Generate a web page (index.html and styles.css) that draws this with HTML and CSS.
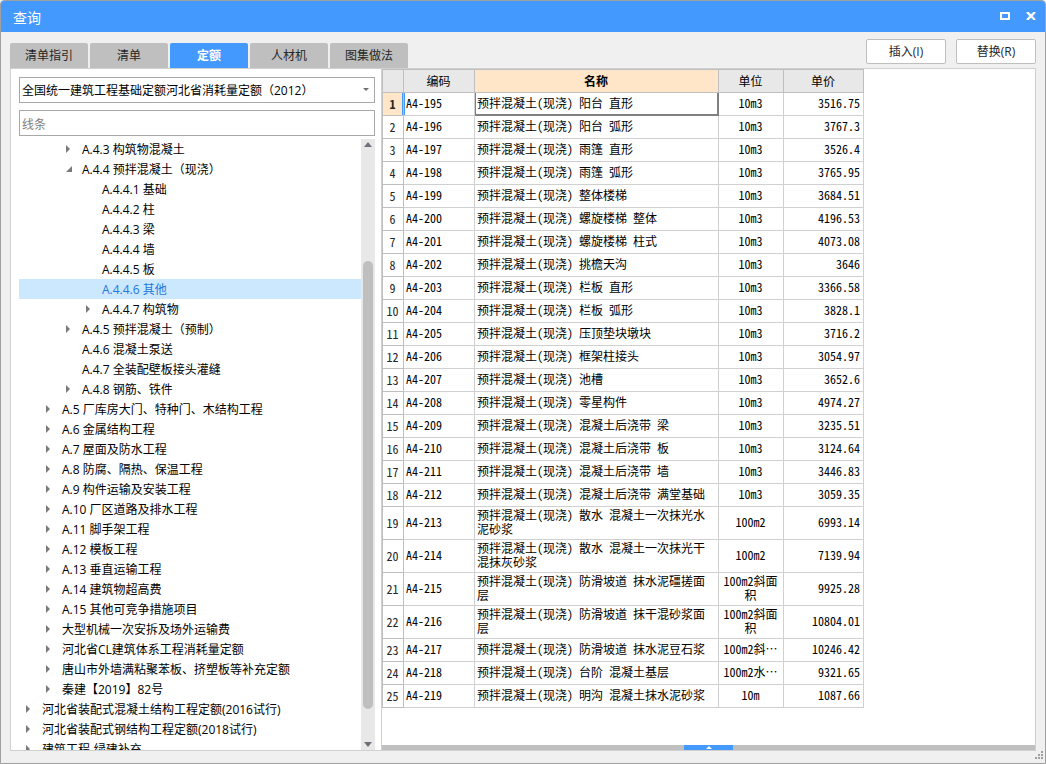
FILE: index.html
```html
<!DOCTYPE html>
<html lang="zh-CN">
<head>
<meta charset="utf-8">
<title>查询</title>
<link rel="stylesheet" href="styles.css">
</head>
<body>
<div class="window">
  <header class="titlebar">
    <h1 class="title">查询</h1>
    <button class="win-btn" aria-label="最大化"><svg width="10" height="8" viewBox="0 0 10 8"><path d="M1 1H9V7H1Z" fill="none" stroke="#fff" stroke-width="2"/></svg></button>
    <button class="win-btn" aria-label="关闭"><svg width="10" height="8" viewBox="0 0 10 8"><path d="M1 0L9 8M9 0L1 8" fill="none" stroke="#fff" stroke-width="2.4"/></svg></button>
  </header>

  <div class="toolbar">
    <nav class="tabs">
      <button class="tab">清单指引</button>
      <button class="tab">清单</button>
      <button class="tab active">定额</button>
      <button class="tab">人材机</button>
      <button class="tab">图集做法</button>
    </nav>
    <div class="actions">
      <button class="action">插入(I)</button>
      <button class="action">替换(R)</button>
    </div>
  </div>

  <main class="panel">
    <aside class="side">
      <div class="combo">
        <select class="field" aria-label="定额库"><option>全国统一建筑工程基础定额河北省消耗量定额（2012）</option></select>
      </div>
      <input class="field search" type="text" placeholder="线条" aria-label="搜索">
      <div class="tree-area">
        <ul class="tree">
          <li class="node l3"><button class="toggle" aria-label="展开"></button>A.4.3 构筑物混凝土</li>
          <li class="node l3"><button class="toggle open" aria-label="收起"></button>A.4.4 预拌混凝土（现浇）</li>
          <li class="node l4 leaf">A.4.4.1 基础</li>
          <li class="node l4 leaf">A.4.4.2 柱</li>
          <li class="node l4 leaf">A.4.4.3 梁</li>
          <li class="node l4 leaf">A.4.4.4 墙</li>
          <li class="node l4 leaf">A.4.4.5 板</li>
          <li class="node l4 leaf selected">A.4.4.6 其他</li>
          <li class="node l4"><button class="toggle" aria-label="展开"></button>A.4.4.7 构筑物</li>
          <li class="node l3"><button class="toggle" aria-label="展开"></button>A.4.5 预拌混凝土（预制）</li>
          <li class="node l3 leaf">A.4.6 混凝土泵送</li>
          <li class="node l3 leaf">A.4.7 全装配壁板接头灌缝</li>
          <li class="node l3"><button class="toggle" aria-label="展开"></button>A.4.8 钢筋、铁件</li>
          <li class="node l2"><button class="toggle" aria-label="展开"></button>A.5 厂库房大门、特种门、木结构工程</li>
          <li class="node l2"><button class="toggle" aria-label="展开"></button>A.6 金属结构工程</li>
          <li class="node l2"><button class="toggle" aria-label="展开"></button>A.7 屋面及防水工程</li>
          <li class="node l2"><button class="toggle" aria-label="展开"></button>A.8 防腐、隔热、保温工程</li>
          <li class="node l2"><button class="toggle" aria-label="展开"></button>A.9 构件运输及安装工程</li>
          <li class="node l2"><button class="toggle" aria-label="展开"></button>A.10 厂区道路及排水工程</li>
          <li class="node l2"><button class="toggle" aria-label="展开"></button>A.11 脚手架工程</li>
          <li class="node l2"><button class="toggle" aria-label="展开"></button>A.12 模板工程</li>
          <li class="node l2"><button class="toggle" aria-label="展开"></button>A.13 垂直运输工程</li>
          <li class="node l2"><button class="toggle" aria-label="展开"></button>A.14 建筑物超高费</li>
          <li class="node l2"><button class="toggle" aria-label="展开"></button>A.15 其他可竞争措施项目</li>
          <li class="node l2"><button class="toggle" aria-label="展开"></button>大型机械一次安拆及场外运输费</li>
          <li class="node l2"><button class="toggle" aria-label="展开"></button>河北省CL建筑体系工程消耗量定额</li>
          <li class="node l2"><button class="toggle" aria-label="展开"></button>唐山市外墙满粘聚苯板、挤塑板等补充定额</li>
          <li class="node l2"><button class="toggle" aria-label="展开"></button>秦建【2019】82号</li>
          <li class="node l1"><button class="toggle" aria-label="展开"></button>河北省装配式混凝土结构工程定额(2016试行)</li>
          <li class="node l1"><button class="toggle" aria-label="展开"></button>河北省装配式钢结构工程定额(2018试行)</li>
          <li class="node l1"><button class="toggle" aria-label="展开"></button>建筑工程-绿建补充</li>
        </ul>
        <div class="scrollbar">
          <button class="scroll-btn" aria-label="向上滚动"><svg width="8" height="5" viewBox="0 0 8 5"><path d="M0 5L4 0L8 5Z" fill="#70707c"/></svg></button>
          <div class="track"><div class="thumb"></div></div>
          <button class="scroll-btn" aria-label="向下滚动"><svg width="8" height="5" viewBox="0 0 8 5"><path d="M0 0L4 5L8 0Z" fill="#70707c"/></svg></button>
        </div>
      </div>
    </aside>

    <section class="content">
      <div class="grid-area">
        <table class="grid">
          <colgroup><col class="c-num"><col class="c-code"><col class="c-name"><col class="c-unit"><col class="c-price"></colgroup>
          <thead>
            <tr><th></th><th>编码</th><th class="current">名称</th><th>单位</th><th>单价</th></tr>
          </thead>
          <tbody>
            <tr class="current-row"><th>1</th><td>A4-195</td><td>预拌混凝土(现浇) 阳台 直形</td><td>10m3</td><td>3516.75</td></tr>
            <tr><th>2</th><td>A4-196</td><td>预拌混凝土(现浇) 阳台 弧形</td><td>10m3</td><td>3767.3</td></tr>
            <tr><th>3</th><td>A4-197</td><td>预拌混凝土(现浇) 雨篷 直形</td><td>10m3</td><td>3526.4</td></tr>
            <tr><th>4</th><td>A4-198</td><td>预拌混凝土(现浇) 雨篷 弧形</td><td>10m3</td><td>3765.95</td></tr>
            <tr><th>5</th><td>A4-199</td><td>预拌混凝土(现浇) 整体楼梯</td><td>10m3</td><td>3684.51</td></tr>
            <tr><th>6</th><td>A4-200</td><td>预拌混凝土(现浇) 螺旋楼梯 整体</td><td>10m3</td><td>4196.53</td></tr>
            <tr><th>7</th><td>A4-201</td><td>预拌混凝土(现浇) 螺旋楼梯 柱式</td><td>10m3</td><td>4073.08</td></tr>
            <tr><th>8</th><td>A4-202</td><td>预拌混凝土(现浇) 挑檐天沟</td><td>10m3</td><td>3646</td></tr>
            <tr><th>9</th><td>A4-203</td><td>预拌混凝土(现浇) 栏板 直形</td><td>10m3</td><td>3366.58</td></tr>
            <tr><th>10</th><td>A4-204</td><td>预拌混凝土(现浇) 栏板 弧形</td><td>10m3</td><td>3828.1</td></tr>
            <tr><th>11</th><td>A4-205</td><td>预拌混凝土(现浇) 压顶垫块墩块</td><td>10m3</td><td>3716.2</td></tr>
            <tr><th>12</th><td>A4-206</td><td>预拌混凝土(现浇) 框架柱接头</td><td>10m3</td><td>3054.97</td></tr>
            <tr><th>13</th><td>A4-207</td><td>预拌混凝土(现浇) 池槽</td><td>10m3</td><td>3652.6</td></tr>
            <tr><th>14</th><td>A4-208</td><td>预拌混凝土(现浇) 零星构件</td><td>10m3</td><td>4974.27</td></tr>
            <tr><th>15</th><td>A4-209</td><td>预拌混凝土(现浇) 混凝土后浇带 梁</td><td>10m3</td><td>3235.51</td></tr>
            <tr><th>16</th><td>A4-210</td><td>预拌混凝土(现浇) 混凝土后浇带 板</td><td>10m3</td><td>3124.64</td></tr>
            <tr><th>17</th><td>A4-211</td><td>预拌混凝土(现浇) 混凝土后浇带 墙</td><td>10m3</td><td>3446.83</td></tr>
            <tr><th>18</th><td>A4-212</td><td>预拌混凝土(现浇) 混凝土后浇带 满堂基础</td><td>10m3</td><td>3059.35</td></tr>
            <tr class="tall"><th>19</th><td>A4-213</td><td>预拌混凝土(现浇) 散水 混凝土一次抹光水泥砂浆</td><td>100m2</td><td>6993.14</td></tr>
            <tr class="tall"><th>20</th><td>A4-214</td><td>预拌混凝土(现浇) 散水 混凝土一次抹光干混抹灰砂浆</td><td>100m2</td><td>7139.94</td></tr>
            <tr class="tall"><th>21</th><td>A4-215</td><td>预拌混凝土(现浇) 防滑坡道 抹水泥礓搓面层</td><td>100m2斜面积</td><td>9925.28</td></tr>
            <tr class="tall"><th>22</th><td>A4-216</td><td>预拌混凝土(现浇) 防滑坡道 抹干混砂浆面层</td><td>100m2斜面积</td><td>10804.01</td></tr>
            <tr><th>23</th><td>A4-217</td><td>预拌混凝土(现浇) 防滑坡道 抹水泥豆石浆</td><td>100m2斜⋯</td><td>10246.42</td></tr>
            <tr><th>24</th><td>A4-218</td><td>预拌混凝土(现浇) 台阶 混凝土基层</td><td>100m2水⋯</td><td>9321.65</td></tr>
            <tr><th>25</th><td>A4-219</td><td>预拌混凝土(现浇) 明沟 混凝土抹水泥砂浆</td><td>10m</td><td>1087.66</td></tr>
          </tbody>
        </table>
      </div>
      <div class="splitter">
        <button class="handle" aria-label="展开下方面板"><svg width="6" height="3" viewBox="0 0 6 3"><path d="M0 3L3 0L6 3Z" fill="#fff"/></svg></button>
      </div>
    </section>
  </main>

  <footer class="statusbar">
    <svg class="grip" width="8" height="8" viewBox="0 0 8 8" fill="#a0a0a0"><path d="M6 0h2v2H6zM3 3h2v2H3zM6 3h2v2H6zM0 6h2v2H0zM3 6h2v2H3zM6 6h2v2H6z"/></svg>
  </footer>
</div>
</body>
</html>
```

FILE: styles.css
```css
* { box-sizing: border-box; }

body {
  margin: 0;
  font: 12px/20px "Open Sans", "Noto Sans CJK SC", sans-serif;
  color: #000;
}

button, input, select {
  margin: 0;
  padding: 0;
  border: 0;
  font: inherit;
  color: inherit;
}

.window {
  display: flex;
  flex-direction: column;
  height: 100vh;
  border: 1px solid #a0a0a0;
  border-radius: 4px 4px 0 0;
  background: #f0f0f0;
  overflow: hidden;
}

/* title bar */
.titlebar {
  display: flex;
  align-items: center;
  gap: 16px;
  flex: none;
  height: 31px;
  padding: 0 9px 0 12px;
  background: #4499ff;
}

.title {
  flex: 1;
  margin: 0;
  font-size: 14px;
  font-weight: 400;
  line-height: 22px;
  padding-top: 2px;
  color: #fff;
}

.win-btn {
  display: flex;
  padding-bottom: 2px;
  background: none;
}

/* tabs and actions */
.toolbar {
  display: flex;
  justify-content: space-between;
  align-items: flex-end;
  flex: none;
  height: 36px;
  padding: 0 9px;
}

.tabs { display: flex; gap: 2px; }

.tab {
  width: 78px;
  height: 25px;
  border-radius: 2px 2px 0 0;
  background: #bfbfbf;
  color: #262626;
}

.tab.active {
  background: #4499ff;
  color: #fff;
  font-weight: 700;
}

.actions {
  display: flex;
  gap: 10px;
  padding-bottom: 4px;
}

.action {
  width: 80px;
  height: 25px;
  border: 1px solid #bfbfbf;
  border-radius: 2px;
  background: #fff;
  color: #262626;
}

/* main panel */
.panel {
  display: flex;
  flex: 1;
  min-height: 0;
  margin: 0 9px;
  border: 1px solid #d0d0d0;
  background: #fff;
}

.side {
  display: flex;
  flex-direction: column;
  flex: none;
  width: 371px;
  padding: 8px 6px 0 8px;
  border-right: 1px solid #d0d0d0;
}

.combo {
  position: relative;
  margin-bottom: 7px;
}

.combo::after {
  content: "";
  position: absolute;
  top: 11px;
  right: 6px;
  border: solid transparent;
  border-width: 3px 3px 0;
  border-top-color: #707070;
  pointer-events: none;
}

.field {
  display: block;
  width: 100%;
  height: 26px;
  padding: 2px 2px 0;
  border: 1px solid #a8a8a8;
  background: #fff;
  appearance: none;
}

.search::placeholder { color: #808080; opacity: 1; }

.search {
  flex: none;
  margin-bottom: 3px;
}

.tree-area {
  display: flex;
  flex: 1;
  min-height: 0;
}

.tree {
  flex: 1;
  margin: 0;
  padding: 0;
  list-style: none;
  overflow: hidden;
}

.node {
  display: flex;
  height: 20px;
  line-height: 22px;
  white-space: nowrap;
}

.l1 { padding-left: 3px; }
.l2 { padding-left: 23px; }
.l3 { padding-left: 43px; }
.l4 { padding-left: 63px; }

.leaf::before { content: ""; width: 20px; }

.selected { background: #cce8ff; color: #2277dd; }

.toggle {
  display: flex;
  align-items: center;
  width: 20px;
  height: 20px;
  padding-left: 4px;
  background: none;
}

.toggle::before {
  content: "";
  width: 4px;
  height: 8px;
  background: #7a7a7a;
  clip-path: polygon(0 0, 100% 50%, 0 100%);
}

.toggle.open::before {
  width: 6px;
  height: 6px;
  clip-path: polygon(100% 0, 100% 100%, 0 100%);
}

.scrollbar {
  display: flex;
  flex-direction: column;
  flex: none;
  width: 14px;
  background: #e8e8e8;
}

.scroll-btn {
  display: flex;
  justify-content: center;
  align-items: center;
  height: 11px;
  background: none;
}

.track {
  flex: 1;
  padding: 0 2px;
}

.thumb {
  height: 76%;
  margin-top: 111px;
  border-radius: 5px;
  background: #bfbfbf;
}

/* data grid */
.content {
  display: flex;
  flex-direction: column;
  flex: 1;
  min-width: 0;
}

.grid-area {
  flex: 1;
  min-height: 0;
  overflow: hidden;
}

.grid {
  width: 482px;
  border-collapse: collapse;
  table-layout: fixed;
  font: 12px/14px "Noto Sans Mono CJK SC", "Liberation Mono", "Noto Sans CJK SC", monospace;
}

.c-num { width: 21px; }
.c-code { width: 71px; }
.c-name { width: 244px; }
.c-unit { width: 65px; }
.c-price { width: 80px; }

.grid tr { height: 23px; }
.grid .tall { height: 33px; }

.grid th, .grid td {
  padding: 0 3px 2px 2px;
  border: 1px solid #d0d0d0;
  vertical-align: middle;
}

.grid th {
  padding: 0 1px 0 0;
  border-color: #bfbfbf;
  font-weight: 400;
  color: #262626;
}

.grid thead th { background: #e8e8e8; color: #000; }
.grid thead .current { background: #ffe6c8; font-weight: 700; }

.grid td:nth-child(4) { text-align: center; }
.grid td:nth-child(5) { text-align: right; }

.grid .current-row th {
  background: #ffe6c8;
  font-weight: 700;
  box-shadow: inset -1px 0 #4499ff;
}

.current-row td:nth-child(2) { box-shadow: inset 1px 0 #4499ff; }

.grid .current-row td:nth-child(3) {
  box-shadow: inset 1px 0 #808080, inset -1px -1px #808080;
  border-color: #4499ff #808080 #808080 #d0d0d0;
}

.splitter {
  display: flex;
  justify-content: center;
  flex: none;
  height: 5px;
  background: #bfbfbf;
}

.handle {
  display: flex;
  justify-content: center;
  align-items: center;
  width: 49px;
  height: 5px;
  background: #4499ff;
}

.statusbar {
  display: flex;
  justify-content: flex-end;
  flex: none;
  height: 12px;
  padding: 0 2px;
}
```
